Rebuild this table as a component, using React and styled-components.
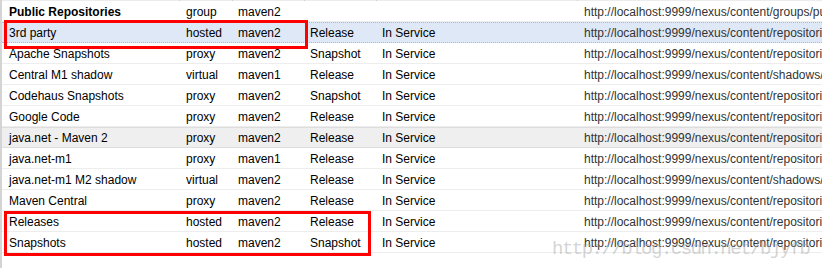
import React from "react";
import styled, { createGlobalStyle, css } from "styled-components";

const Global = createGlobalStyle`
  html, body { margin: 0; padding: 0; background: #fff; }
  body { font-family: "Liberation Sans", Arial, sans-serif; }
`;

const COLS = "178px 53px 72px 72px 201px 420px";

const Page = styled.div`
  position: relative;
  width: 822px;
  height: 268px;
  overflow: hidden;
  background: #fff;
`;

const Grid = styled.div`
  height: 100%;
  border-left: 2px solid #d4d4d4;
  box-sizing: border-box;
  display: flex;
  flex-direction: column;
`;

const HeaderStrip = styled.div`
  display: grid;
  grid-template-columns: ${COLS};
  height: 1px;
  background: #ececec;
`;

const HeaderCell = styled.div`
  border-right: 1px solid #cfcfcf;
`;

const Row = styled.div`
  display: grid;
  grid-template-columns: ${COLS};
  height: 21px;
  box-sizing: border-box;
  border-top: 1px solid #fff;
  border-bottom: 1px solid #ededed;
  font-size: 12px;
  line-height: 19px;
  color: #000;
  ${(p) =>
    p.$state === "selected" &&
    css`
      background: #dfe8f6;
      border-top: 1px dotted #a3bae9;
      border-bottom: 1px dotted #a3bae9;
    `}
  ${(p) =>
    p.$state === "hover" &&
    css`
      background: #efefef;
      border-top: 1px solid #dddddd;
      border-bottom: 1px solid #dddddd;
    `}
`;

const Cell = styled.div`
  padding-left: ${(p) => p.$pad}px;
  padding-top: 1px;
  white-space: nowrap;
  overflow: hidden;
  font-weight: ${(p) => (p.$bold ? 700 : 400)};
  color: ${(p) => (p.$url ? "#333" : "#000")};
`;

const Mark = styled.div`
  position: absolute;
  border: 3px solid #ff0000;
  box-sizing: border-box;
  pointer-events: none;
`;

const Watermark = styled.div`
  position: absolute;
  left: 552px;
  top: 240px;
  font-family: "Liberation Mono", "DejaVu Sans Mono", monospace;
  font-size: 19px;
  line-height: 19px;
  letter-spacing: -1.5px;
  color: rgba(170, 170, 170, 0.5);
  white-space: nowrap;
  pointer-events: none;
`;

const BASE = "http://localhost:9999/nexus/content/";

const rows = [
  { name: "Public Repositories", type: "group", format: "maven2", policy: "", status: "", url: BASE + "groups/public/", bold: true },
  { name: "3rd party", type: "hosted", format: "maven2", policy: "Release", status: "In Service", url: BASE + "repositories/thirdparty/", state: "selected" },
  { name: "Apache Snapshots", type: "proxy", format: "maven2", policy: "Snapshot", status: "In Service", url: BASE + "repositories/apache-snapshots/" },
  { name: "Central M1 shadow", type: "virtual", format: "maven1", policy: "Release", status: "In Service", url: BASE + "shadows/central-m1/" },
  { name: "Codehaus Snapshots", type: "proxy", format: "maven2", policy: "Snapshot", status: "In Service", url: BASE + "repositories/codehaus-snapshots/" },
  { name: "Google Code", type: "proxy", format: "maven2", policy: "Release", status: "In Service", url: BASE + "repositories/google/" },
  { name: "java.net - Maven 2", type: "proxy", format: "maven2", policy: "Release", status: "In Service", url: BASE + "repositories/java.net-m2/", state: "hover" },
  { name: "java.net-m1", type: "proxy", format: "maven1", policy: "Release", status: "In Service", url: BASE + "repositories/java.net-m1/" },
  { name: "java.net-m1 M2 shadow", type: "virtual", format: "maven2", policy: "Release", status: "In Service", url: BASE + "shadows/java.net-m1-m2/" },
  { name: "Maven Central", type: "proxy", format: "maven2", policy: "Release", status: "In Service", url: BASE + "repositories/central/" },
  { name: "Releases", type: "hosted", format: "maven2", policy: "Release", status: "In Service", url: BASE + "repositories/releases/" },
  { name: "Snapshots", type: "hosted", format: "maven2", policy: "Snapshot", status: "In Service", url: BASE + "repositories/snapshots/" },
];

export default function App() {
  return (
    <>
      <Global />
      <Page>
        <Grid>
          <HeaderStrip>
            {[0, 1, 2, 3, 4, 5].map((i) => (
              <HeaderCell key={i} />
            ))}
          </HeaderStrip>
          {rows.map((r) => (
            <Row key={r.name} $state={r.state}>
              <Cell $pad={7} $bold={r.bold}>{r.name}</Cell>
              <Cell $pad={6}>{r.type}</Cell>
              <Cell $pad={5}>{r.format}</Cell>
              <Cell $pad={5}>{r.policy}</Cell>
              <Cell $pad={5}>{r.status}</Cell>
              <Cell $pad={6} $url>{r.url}</Cell>
            </Row>
          ))}
        </Grid>
        <Mark style={{ left: 4, top: 20, width: 304, height: 29 }} />
        <Mark style={{ left: 4, top: 211, width: 367, height: 45 }} />
        <Watermark>http://blog.csdn.net/bjyfb</Watermark>
      </Page>
    </>
  );
}
